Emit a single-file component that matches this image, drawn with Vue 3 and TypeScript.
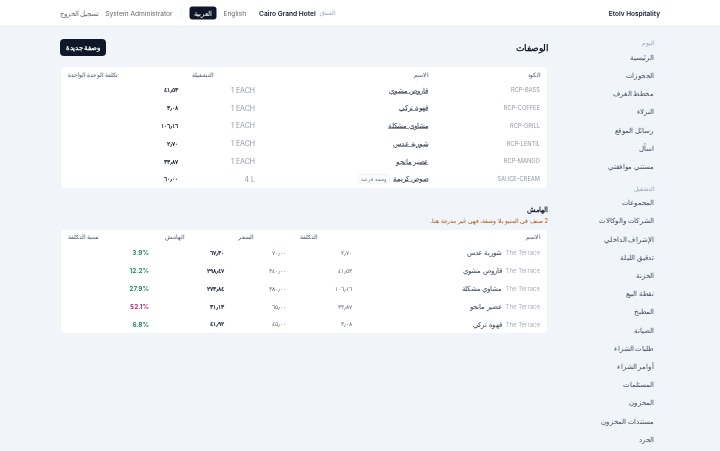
<script setup lang="ts">
const navGroups = [
  { label: 'اليوم', items: ['الرئيسية', 'الحجوزات', 'مخطط الغرف', 'النزلاء', 'رسائل الموقع', 'اسأل', 'مستني موافقتي'] },
  { label: 'التشغيل', items: ['المجموعات', 'الشركات والوكالات', 'الإشراف الداخلي', 'تدقيق الليلة', 'الخزنة', 'نقطة البيع', 'المطبخ', 'الصيانة', 'طلبات الشراء', 'أوامر الشراء', 'المستلمات', 'المخزون', 'مستندات المخزون', 'الجرد'] },
]
const recipes = [
  { code: 'RCP-BASS', name: 'قاروص مشوي', batch: '1 EACH', cost: '٤١٫٥٣' },
  { code: 'RCP-COFFEE', name: 'قهوة تركي', batch: '1 EACH', cost: '٣٫٠٨' },
  { code: 'RCP-GRILL', name: 'مشاوي مشكلة', batch: '1 EACH', cost: '١٠٦٫١٦' },
  { code: 'RCP-LENTIL', name: 'شوربة عدس', batch: '1 EACH', cost: '٢٫٧٠' },
  { code: 'RCP-MANGO', name: 'عصير مانجو', batch: '1 EACH', cost: '٣٣٫٨٧' },
  { code: 'SAUCE-CREAM', name: 'صوص كريمة', batch: '4 L', cost: '٦٠٫٠٠', tag: 'وصفة فرعية' },
]
const margins = [
  { name: 'شوربة عدس', cost: '٢٫٧٠', price: '٧٠٫٠٠', margin: '٦٧٫٣٠', pct: '3.9%', bad: false },
  { name: 'قاروص مشوي', cost: '٤١٫٥٣', price: '٣٤٠٫٠٠', margin: '٢٩٨٫٤٧', pct: '12.2%', bad: false },
  { name: 'مشاوي مشكلة', cost: '١٠٦٫١٦', price: '٣٨٠٫٠٠', margin: '٢٧٣٫٨٤', pct: '27.9%', bad: false },
  { name: 'عصير مانجو', cost: '٣٣٫٨٧', price: '٦٥٫٠٠', margin: '٣١٫١٣', pct: '52.1%', bad: true },
  { name: 'قهوة تركي', cost: '٣٫٠٨', price: '٤٥٫٠٠', margin: '٤١٫٩٢', pct: '6.8%', bad: false },
]
</script>

<template>
  <div class="viewport">
  <div class="app" dir="rtl">
    <header class="topbar">
      <div class="brand">Etolv Hospitality</div>
      <div class="tools">
        <span class="muted-label">الفندق</span>
        <strong class="hotel">Cairo Grand Hotel</strong>
        <span class="lang">English</span>
        <span class="lang active">العربية</span>
        <span class="divider"></span>
        <span class="user">System Administrator</span>
        <span class="logout">تسجيل الخروج</span>
      </div>
    </header>
    <div class="body">
      <aside class="sidebar">
        <section v-for="g in navGroups" :key="g.label" class="nav-group">
          <div class="nav-label">{{ g.label }}</div>
          <a v-for="i in g.items" :key="i" class="nav-item">{{ i }}</a>
        </section>
      </aside>
      <main class="main">
        <div class="page-head">
          <h1>الوصفات</h1>
          <button class="primary">وصفة جديدة</button>
        </div>
        <div class="card">
          <table class="t1">
            <colgroup><col class="c1" /><col class="c2" /><col class="c3" /><col class="c4" /></colgroup>
            <thead>
              <tr><th>الكود</th><th>الاسم</th><th class="end">التشغيلة</th><th class="end">تكلفة الوحدة الواحدة</th></tr>
            </thead>
            <tbody>
              <tr v-for="r in recipes" :key="r.code">
                <td class="code">{{ r.code }}</td>
                <td><a class="link">{{ r.name }}</a><span v-if="r.tag" class="tag">{{ r.tag }}</span></td>
                <td class="num batch" dir="ltr">{{ r.batch }}</td>
                <td class="num strong">{{ r.cost }}</td>
              </tr>
            </tbody>
          </table>
        </div>
        <h2>الهامش</h2>
        <p class="warn">2 صنف في المنيو بلا وصفة، فهي غير مدرجة هنا.</p>
        <div class="card">
          <table class="t2">
            <colgroup><col class="d1" /><col class="d2" /><col class="d3" /><col class="d4" /><col class="d5" /></colgroup>
            <thead>
              <tr><th>الاسم</th><th class="end">التكلفة</th><th class="end">السعر</th><th class="end">الهامش</th><th class="end">نسبة التكلفة</th></tr>
            </thead>
            <tbody>
              <tr v-for="m in margins" :key="m.name">
                <td class="name2"><span class="outlet">The Terrace</span>{{ m.name }}</td>
                <td class="num soft">{{ m.cost }}</td>
                <td class="num soft">{{ m.price }}</td>
                <td class="num strong">{{ m.margin }}</td>
                <td class="num pct" :class="{ bad: m.bad }">{{ m.pct }}</td>
              </tr>
            </tbody>
          </table>
        </div>
      </main>
    </div>
  </div>
  </div>
</template>

<style>
html, body { margin: 0; height: 451px; overflow: hidden; background: #f1f5f9; }
</style>

<style scoped>
.viewport { width: 720px; height: 451px; overflow: hidden; filter: blur(.3px); }
.app { width: 1440px; height: 902px; overflow: hidden; background: #f1f5f9; color: #0f172a; font-family: Inter, sans-serif; font-size: 13px; transform: scale(.5); transform-origin: 0 0; }
.topbar { height: 54px; box-sizing: border-box; background: #fff; border-bottom: 2px solid #e9eef4; display: flex; align-items: center; justify-content: space-between; padding: 0 120px; }
.brand { font-size: 13px; font-weight: 600; }
.tools { display: flex; align-items: center; font-size: 13.25px; }
.muted-label { font-size: 11.5px; color: #94a3b8; margin-left: 8px; }
.hotel { font-weight: 600; margin-left: 26px; }
.lang { color: #64696f; }
.lang.active { height: 26px; width: 54px; line-height: 26px; text-align: center; border-radius: 6px; background: #0f172a; color: #fff; font-weight: 500; margin-right: 14px; }
.divider { width: 2px; height: 18px; background: #eef1f5; margin: 0 16px; }
.user { color: #64696f; margin-left: 12px; }
.logout { color: #64696f; }
.body { display: flex; align-items: flex-start; }
.sidebar { width: 344px; flex: none; box-sizing: border-box; padding: 22px 132px 0 0; display: flex; flex-direction: column; gap: 16px; }
.nav-label { font-size: 12px; color: #94a3b8; line-height: 20px; }
.nav-item { display: block; font-size: 13.75px; color: #3f4a5c; line-height: 36.4px; white-space: nowrap; }
.main { flex: none; width: 976px; padding-top: 24px; }
.page-head { display: flex; justify-content: space-between; align-items: center; height: 34px; margin-bottom: 22px; }
h1 { margin: 0; font-size: 18px; font-weight: 600; }
.primary { height: 34px; width: 92px; padding: 0; border: 0; border-radius: 8px; background: #0f172a; color: #fff; font: 600 13px Inter, sans-serif; }
.card { margin: 0 2px; background: #fff; border-radius: 8px; overflow: hidden; }
table { width: 100%; border-collapse: collapse; table-layout: fixed; }
.c1 { width: 224px; } .c2 { width: 346px; } .c3 { width: 154px; } .c4 { width: 248px; }
.d1 { width: 376px; } .d2 { width: 132px; } .d3 { width: 124px; } .d4 { width: 146px; } .d5 { width: 194px; }
th { padding: 0 14px; height: 28px; font-size: 12px; font-weight: 500; color: #475569; text-align: right; }
th.end { text-align: left; }
td { padding: 0 14px; height: 35.6px; font-size: 13px; white-space: nowrap; }
.num { text-align: right; font-size: 12px; }
.code { color: #8f98a6; font-size: 11.5px; }
td.batch { color: #8f98a6; font-size: 14px; }
.strong { font-weight: 600; color: #0f172a; }
.soft { color: #5f6875; }
.link { color: #1e293b; text-decoration: underline; }
.tag { display: inline-block; margin-right: 6px; padding: 0 5px; font-size: 10px; line-height: 15px; color: #6b7280; border: 2px solid #eef1f5; border-radius: 6px; }
h2 { margin: 32px 0 0; font-size: 13px; font-weight: 600; line-height: 20px; }
.warn { margin: 4px 0 10px; font-size: 11.5px; line-height: 18px; color: #b45309; }
.name2 { color: #334155; }
.outlet { color: #a8b0bd; font-size: 12px; margin-left: 8px; }
td.pct { font-weight: 600; font-size: 13px; color: #15825a; padding-right: 18px; }
td.pct.bad { color: #be185d; }
</style>
